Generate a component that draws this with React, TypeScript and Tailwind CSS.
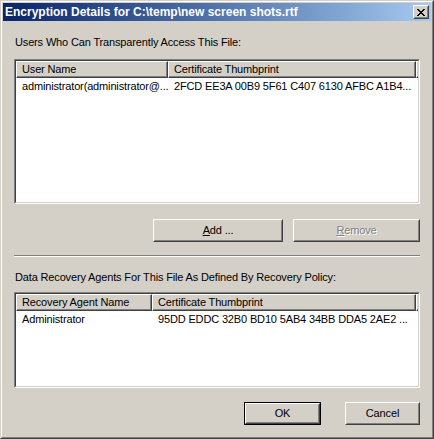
import React from "react";

const raised =
  "border border-t-white border-l-white border-r-[#404040] border-b-[#404040]";
const raisedInner =
  "border border-t-[#d4d0c8] border-l-[#d4d0c8] border-r-[#808080] border-b-[#808080]";

function Button(props: { children: React.ReactNode; width: string; def?: boolean }) {
  const box = (
    <div className={`h-full ${raised}`}>
      <div className={`h-full ${raisedInner} flex items-center justify-center`}>
        {props.children}
      </div>
    </div>
  );
  return (
    <div className={`${props.width} h-[23px] ${props.def ? "border border-black" : ""}`}>
      {box}
    </div>
  );
}

interface Column {
  title: string;
  width: string;
}

function ListView(props: { cols: Column[]; rows: string[][]; height: string }) {
  return (
    <div className={`${props.height} border border-t-[#808080] border-l-[#808080] border-r-white border-b-white`}>
      <div className="h-full border border-t-[#404040] border-l-[#404040] border-r-[#d4d0c8] border-b-[#d4d0c8] bg-white flex flex-col">
        <div className="flex h-[17px] shrink-0">
          {props.cols.map((c) => (
            <div key={c.title} className={`${c.width} h-full border-t border-l border-t-white border-l-white border-r border-b border-r-[#404040] border-b-[#404040] bg-[#d4d0c8]`}>
              <div className="h-full border-r border-b border-r-[#808080] border-b-[#808080] pl-[5px] leading-[15px] whitespace-nowrap overflow-hidden">
                {c.title}
              </div>
            </div>
          ))}
          <div className="flex-1 h-full border-t border-l border-t-white border-l-white border-b border-b-[#404040] bg-[#d4d0c8]">
            <div className="h-full border-b border-b-[#808080]" />
          </div>
        </div>
        {props.rows.map((r, i) => (
          <div key={i} className="flex h-[14px] mt-px leading-[14px]">
            {r.map((cell, j) => (
              <div key={j} className={`${props.cols[j].width} pl-[6px] whitespace-nowrap`}>
                {cell}
              </div>
            ))}
          </div>
        ))}
      </div>
    </div>
  );
}

export default function App() {
  return (
    <div
      className="w-[434px] h-[439px] bg-[#d4d0c8] text-black text-[11px] tracking-[-0.15px] border border-t-[#d4d0c8] border-l-[#d4d0c8] border-r-[#404040] border-b-[#404040]"
      style={{ fontFamily: '"Liberation Sans", Arial, sans-serif' }}
    >
      <div className="h-full border border-t-white border-l-white border-r-[#808080] border-b-[#808080] p-px flex flex-col">
        {/* title bar */}
        <div className="h-[18px] shrink-0 flex items-center bg-gradient-to-r from-[#0a246a] to-[#a6caf0] pl-[2px] pr-[2px]">
          <span className="flex-1 text-white font-bold text-[12px] tracking-normal leading-[14px] whitespace-nowrap">
            Encryption Details for C:\temp\new screen shots.rtf
          </span>
          <div className={`w-[16px] h-[14px] bg-[#d4d0c8] ${raised}`}>
            <div className={`h-full ${raisedInner} flex items-center justify-center`}>
              <svg width="8" height="7" viewBox="0 0 8 7" shapeRendering="crispEdges">
                <path d="M0 0h2v1h-2zM6 0h2v1h-2zM1 1h2v1h-2zM5 1h2v1h-2zM2 2h4v1h-4zM3 3h2v1h-2zM2 4h4v1h-4zM1 5h2v1h-2zM5 5h2v1h-2zM0 6h2v1h-2zM6 6h2v1h-2z" fill="#000" />
              </svg>
            </div>
          </div>
        </div>

        {/* body */}
        <div className="flex-1 flex flex-col px-[11px]">
          <p className="mt-[15px] leading-[13px] pl-px">Users Who Can Transparently Access This File:</p>

          <div className="mt-[10px]">
            <ListView
              height="h-[145px]"
              cols={[
                { title: "User Name", width: "w-[152px]" },
                { title: "Certificate Thumbprint", width: "w-[248px]" },
              ]}
              rows={[["administrator(administrator@...", "2FCD EE3A 00B9 5F61 C407 6130 AFBC A1B4..."]]}
            />
          </div>

          <div className="mt-[15px] flex justify-end gap-[10px]">
            <Button width="w-[130px]">
              <span><span className="underline">A</span>dd ...</span>
            </Button>
            <Button width="w-[127px]">
              <span className="text-[#808080] [text-shadow:1px_1px_0_#fff]">
                <span className="underline">R</span>emove
              </span>
            </Button>
          </div>

          <div className="mt-[13px] border-t border-t-[#808080] border-b border-b-white" />

          <p className="mt-[14px] leading-[13px] pl-px">Data Recovery Agents For This File As Defined By Recovery Policy:</p>

          <div className="mt-[8px]">
            <ListView
              height="h-[96px]"
              cols={[
                { title: "Recovery Agent Name", width: "w-[136px]" },
                { title: "Certificate Thumbprint", width: "w-[264px]" },
              ]}
              rows={[["Administrator", "95DD EDDC 32B0 BD10 5AB4 34BB DDA5 2AE2 ..."]]}
            />
          </div>

          <div className="mt-[14px] flex justify-end gap-[24px]">
            <Button width="w-[77px]" def>
              <span>OK</span>
            </Button>
            <Button width="w-[75px]">
              <span>Cancel</span>
            </Button>
          </div>
        </div>
      </div>
    </div>
  );
}
